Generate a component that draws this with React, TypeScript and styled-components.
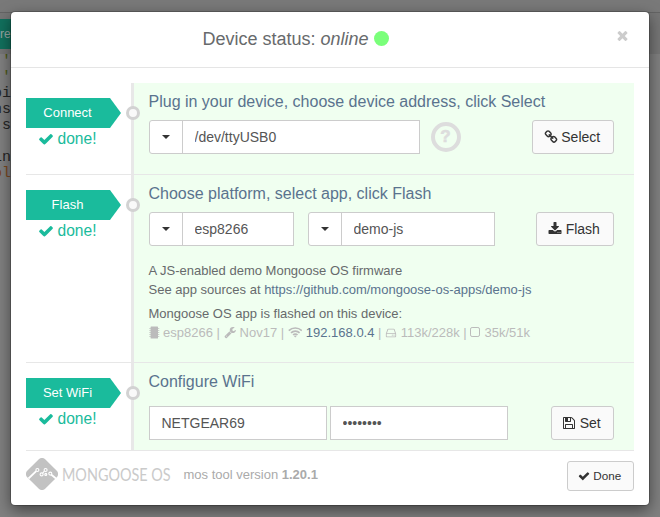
import React from "react";
import styled, { createGlobalStyle, css } from "styled-components";

const GlobalStyle = createGlobalStyle`
  * { box-sizing: border-box; }
  body {
    margin: 0;
    overflow: hidden;
    background: #7e7e7e;
    color: #676a6c;
    font: 13px/18.57px "Liberation Sans", Arial, sans-serif;
  }
`;

/* Page behind the dialog */

const Stage = styled.div`
  position: relative;
  width: 660px;
  height: 517px;
  overflow: hidden;
`;

const Page = styled.div`
  display: flex;
  flex-direction: column;
  height: 100%;
  background: #808080;
`;

const PageBar = styled.div`
  height: 13px;
  background: #797979;
  border-bottom: 1px solid #646464;
`;

const PageTools = styled.div`
  height: 41px;
  padding-top: 6px;
  background: #767676;
`;

const PageButton = styled.div`
  width: 60px;
  height: 30px;
  background: #11705d;
  color: #9aa8a5;
  font-size: 12px;
  line-height: 30px;
`;

const Code = styled.div`
  font: 15px/16px "Liberation Mono", monospace;
  color: #1c1c1c;
`;

const CodeLine = styled.div<{ $color?: string }>`
  height: 16px;
  white-space: pre;
  text-indent: -7px;
  color: ${(p) => p.$color ?? "#252525"};
`;

/* Dialog */

const Dialog = styled.section`
  position: absolute;
  left: 11px;
  top: 12px;
  width: 638px;
  height: 493px;
  display: flex;
  flex-direction: column;
  background: #fff;
  border-radius: 4px;
  box-shadow: 0 0 0 1px rgba(0, 0, 0, 0.2), 0 5px 15px rgba(0, 0, 0, 0.5);
`;

const Header = styled.header`
  display: grid;
  grid-template-columns: 40px 1fr 40px;
  height: 56px;
  border-bottom: 1px solid #e5e5e5;
`;

const Title = styled.h4`
  grid-column: 2;
  display: flex;
  align-items: center;
  justify-content: center;
  margin: 0;
  padding: 0 69px 2px 0;
  font-size: 18px;
  font-weight: 400;
  line-height: 20px;
  white-space: pre;
`;

const OnlineDot = styled.span`
  width: 15px;
  height: 15px;
  margin-left: 5px;
  border-radius: 50%;
  background: #7aff7a;
`;

const Close = styled.button`
  display: flex;
  padding: 16px 0 0 6px;
  border: 0;
  background: none;
  color: #ccc;
`;

const Steps = styled.main`
  padding: 15px 15px 0;
`;

const Step = styled.div<{ $height: number }>`
  display: grid;
  grid-template-columns: 105px 1fr;
  height: ${(p) => p.$height}px;
  border-bottom: 1px solid #e7e7e7;
`;

const StepSide = styled.div`
  padding-top: 15px;
`;

const RibbonRow = styled.div`
  display: flex;
  align-items: center;
  gap: 5px;
  width: 120px;
  height: 30px;
`;

const Ribbon = styled.div`
  flex: none;
  width: 95px;
  height: 30px;
  padding-right: 12px;
  background: #1abb9c;
  clip-path: polygon(0 0, 84px 0, 100% 50%, 84px 100%, 0 100%);
  color: #fff;
  font-size: 13px;
  line-height: 30px;
  text-align: center;
`;

const Node = styled.span`
  position: relative;
  z-index: 1;
  flex: none;
  width: 14px;
  height: 14px;
  border: 3px solid #d2d2d2;
  border-radius: 50%;
  background: #f9f9f9;
`;

const DoneMark = styled.div`
  display: flex;
  align-items: center;
  gap: 3.5px;
  height: 22px;
  padding-left: 12px;
  color: #1abb9c;
  font-size: 15.6px;
`;

const StepBody = styled.div`
  padding: 8px 20px 0 15px;
  border-left: 3px solid #e8e8e8;
  background: #f0fff0;
`;

const StepTitle = styled.h5`
  height: 20px;
  margin: 0 0 0 -0.5px;
  color: #5a738e;
  font-size: 16px;
  font-weight: 400;
  line-height: 21px;
  white-space: nowrap;
`;

const ControlRow = styled.div<{ $top: number }>`
  display: flex;
  height: 34px;
  margin-top: ${(p) => p.$top}px;
`;

const InputGroup = styled.div`
  display: flex;
`;

const DropButton = styled.button`
  display: flex;
  align-items: center;
  justify-content: center;
  width: 34px;
  height: 34px;
  margin-right: -1px;
  padding: 0;
  border: 1px solid #ccc;
  border-radius: 3px 0 0 3px;
  background: #fff;
`;

const Caret = styled.span`
  border-top: 4px solid #333;
  border-left: 4px solid transparent;
  border-right: 4px solid transparent;
`;

const Input = styled.input<{ $width: number }>`
  width: ${(p) => p.$width}px;
  height: 34px;
  padding: 0 11.5px;
  border: 1px solid #ccc;
  border-radius: 0;
  outline: 0;
  background: #fff;
  color: #555;
  font: 14px/20px "Liberation Sans", Arial, sans-serif;
`;

const HelpBadge = styled.span`
  display: flex;
  align-items: center;
  justify-content: center;
  width: 30px;
  height: 30px;
  margin: 2px 0 0 10.5px;
  border: 4px solid #ddd;
  border-radius: 50%;
  color: #ddd;
  font-size: 17px;
  font-weight: 700;
  -webkit-text-stroke: 0.6px #ddd;
`;

const Button = styled.button<{ $width: number; $small?: boolean }>`
  display: flex;
  flex: none;
  align-items: center;
  justify-content: center;
  gap: 3.5px;
  width: ${(p) => p.$width}px;
  height: 34px;
  margin-left: auto;
  padding: 0 2px 0 0;
  border: 1px solid #ccc;
  border-radius: 3px;
  background: #fafafa;
  color: #333;
  font: 14px/20px "Liberation Sans", Arial, sans-serif;
  ${(p) => p.$small && css`
    height: 30px;
    font-size: 11.7px;
  `}
`;

const Note = styled.div<{ $top: number }>`
  height: 19px;
  margin: ${(p) => p.$top}px 0 0 -0.5px;
  line-height: 19px;
  white-space: pre;
`;

const Link = styled.a`
  color: #5a738e;
`;

const DeviceFacts = styled(Note)`
  display: flex;
  align-items: center;
  color: #bbb;

  ${Link} {
    margin-left: 3.5px;
  }
`;

const Footer = styled.footer`
  display: flex;
  align-items: center;
  height: 50px;
  padding: 0 15px;
  color: #aaa;
`;

const LogoWord = styled.span`
  width: 108px;
  margin: -3px 0 0 4px;
  color: #cacaca;
  font: 400 16.6px/24px Lato, "Open Sans", sans-serif;
  white-space: nowrap;
  transform: scaleX(0.868);
  transform-origin: left center;
`;

const Version = styled.span`
  margin: -2px 0 0 13.5px;
`;

const Glyph = styled.svg`
  flex: none;
  fill: currentColor;
`;

const LogoGlyph = styled(Glyph)`
  margin-top: -4px;
`;

const PATHS = {
  check: "M1671 566q0 40-28 68l-724 724-136 136q-28 28-68 28t-68-28l-136-136-362-362q-28-28-28-68t28-68l136-136q28-28 68-28t68 28l294 295 656-657q28-28 68-28t68 28l136 136q28 28 28 68z",
  close: "M1490 1322q0 40-28 68l-136 136q-28 28-68 28t-68-28l-294-294-294 294q-28 28-68 28t-68-28l-136-136q-28-28-28-68t28-68l294-294-294-294q-28-28-28-68t28-68l136-136q28-28 68-28t68 28l294 294 294-294q28-28 68-28t68 28l136 136q28 28 28 68t-28 68l-294 294 294 294q28 28 28 68z",
  download: "M1344 1344q0-26-19-45t-45-19-45 19-19 45 19 45 45 19 45-19 19-45zm256 0q0-26-19-45t-45-19-45 19-19 45 19 45 45 19 45-19 19-45zm128-224v320q0 40-28 68t-68 28h-1472q-40 0-68-28t-28-68v-320q0-40 28-68t68-28h465l135 136q58 56 136 56t136-56l136-136h464q40 0 68 28t28 68zm-325-569q17 41-14 70l-448 448q-18 19-45 19t-45-19l-448-448q-31-29-14-70 17-39 59-39h256v-448q0-26 19-45t45-19h256q26 0 45 19t19 45v448h256q42 0 59 39z",
  wrench: "M448 1472q0-26-19-45t-45-19-45 19-19 45 19 45 45 19 45-19 19-45zm644-420l-682 682q-37 37-90 37-52 0-91-37l-106-108q-38-36-38-90 0-53 38-91l681-681q39 98 114.5 173.5t173.5 114.5zm634-435q0 39-23 106-47 134-164.5 217.5t-258.5 83.5q-185 0-316.5-131.5t-131.5-316.5 131.5-316.5 316.5-131.5q58 0 121.5 16.5t107.5 46.5q16 11 16 28t-16 28l-293 169v224l193 107q5-3 79-48.5t135.5-81 70.5-35.5q15 0 23.5 10t8.5 25z",
  save: "M512 1536h768v-384h-768v384zm896 0h128v-896q0-14-10-38.5t-20-34.5l-281-281q-10-10-34-20t-39-10v416q0 40-28 68t-68 28h-576q-40 0-68-28t-28-68v-416h-128v1280h128v-416q0-40 28-68t68-28h832q40 0 68 28t28 68v416zm-384-928v-320q0-13-9.5-22.5t-22.5-9.5h-192q-13 0-22.5 9.5t-9.5 22.5v320q0 13 9.5 22.5t22.5 9.5h192q13 0 22.5-9.5t9.5-22.5zm640 32v928q0 40-28 68t-68 28h-1344q-40 0-68-28t-28-68v-1344q0-40 28-68t68-28h928q40 0 88 20t76 48l280 280q28 28 48 76t20 88z",
  drive: "M1168 1216q0 33-23.5 56.5t-56.5 23.5-56.5-23.5-23.5-56.5 23.5-56.5 56.5-23.5 56.5 23.5 23.5 56.5zm256 0q0 33-23.5 56.5t-56.5 23.5-56.5-23.5-23.5-56.5 23.5-56.5 56.5-23.5 56.5 23.5 23.5 56.5zm112 160v-320q0-13-9.5-22.5t-22.5-9.5h-1216q-13 0-22.5 9.5t-9.5 22.5v320q0 13 9.5 22.5t22.5 9.5h1216q13 0 22.5-9.5t9.5-22.5zm-1230-480h1180l-157-482q-4-13-16-21.5t-26-8.5h-782q-14 0-26 8.5t-16 21.5zm1358 160v320q0 66-47 113t-113 47h-1216q-66 0-113-47t-47-113v-320q0-25 16-75l197-606q17-53 63-86t101-33h782q55 0 101 33t63 86l197 606q16 50 16 75z",
  link: "M1520 1216q0-40-28-68l-208-208q-28-28-68-28-42 0-72 32 3 3 19 18.5t21.5 21.5 15 19 13 25.5 3.5 27.5q0 40-28 68t-68 28q-15 0-27.5-3.5t-25.5-13-19-15-21.5-21.5-18.5-19q-33 31-33 73 0 40 28 68l206 207q27 27 68 27 40 0 68-26l147-146q28-28 28-67zm-703-705q0-40-28-68l-206-207q-28-28-68-28-39 0-68 27l-147 146q-28 28-28 67 0 40 28 68l208 208q27 27 68 27 42 0 72-31-3-3-19-18.5t-21.5-21.5-15-19-13-25.5-3.5-27.5q0-40 28-68t68-28q15 0 27.5 3.5t25.5 13 19 15 21.5 21.5 18.5 19q33-31 33-73zm895 705q0 120-85 203l-147 146q-83 83-203 83-121 0-204-85l-206-207q-83-83-83-203 0-123 88-209l-88-88q-86 88-208 88-120 0-204-84l-208-208q-84-84-84-204t85-203l147-146q83-83 203-83 121 0 204 85l206 207q83 83 83 203 0 123-88 209l88 88q86-88 208-88 120 0 204 84l208 208q84 84 84 204z",
};

const Icon = ({ name, size = 14 }: { name: keyof typeof PATHS; size?: number }) => (
  <Glyph width={size} height={size} viewBox="0 0 1792 1792">
    <path d={PATHS[name]} />
  </Glyph>
);

const ChipIcon = () => (
  <Glyph width="11" height="13" viewBox="0 0 11 13">
    <rect x="1.6" y="0.5" width="7.4" height="12" rx="0.6" />
    <path d="M.3 2.5h10M.3 4.5h10M.3 6.5h10M.3 8.5h10M.3 10.5h10" stroke="currentColor" strokeWidth="0.7" />
  </Glyph>
);

const WifiIcon = () => (
  <Glyph width="14.5" height="13" viewBox="0.2 0 14.5 13">
    <g fill="none" stroke="currentColor" strokeWidth="1.7">
      <path d="M1 4.7a9.2 9.2 0 0 1 13 0" />
      <path d="M3.2 6.9a6.1 6.1 0 0 1 8.6 0" />
      <path d="M5.3 9a3.1 3.1 0 0 1 4.4 0" />
    </g>
    <path d="M6.1 10a2.2 2.2 0 0 1 2.8 0L7.5 11.5z" />
  </Glyph>
);

const SquareIcon = () => (
  <Glyph width="10.5" height="13" viewBox="0 0 10.5 13">
    <rect x="0.5" y="1.5" width="9" height="9" rx="1.6" fill="none" stroke="currentColor" />
  </Glyph>
);

const LogoMark = () => (
  <LogoGlyph width="32" height="32" viewBox="0 0 32 32">
    <rect x="3.3" y="3.3" width="25.4" height="25.4" rx="4.5" transform="rotate(45 16 16)" fill="#c2c2c2" />
    <g fill="none" stroke="#fff" strokeWidth="1.1">
      <path d="M2.5 20.5 10.2 13.2" strokeWidth="1.8" />
      <circle cx="11.4" cy="12" r="1.5" />
      <circle cx="15.6" cy="16.4" r="1.5" />
      <path d="M16.7 15.2 18.4 13.2" />
      <circle cx="19.6" cy="12" r="1.5" />
      <circle cx="19.8" cy="16.4" r="1" />
      <circle cx="24.3" cy="15.6" r="1.5" />
      <path d="M25.4 16.8 30 20.5" strokeWidth="1.8" />
    </g>
  </LogoGlyph>
);

const StepLabel = ({ children }: { children: React.ReactNode }) => (
  <StepSide>
    <RibbonRow>
      <Ribbon>{children}</Ribbon>
      <Node />
    </RibbonRow>
    <DoneMark>
      <Icon name="check" size={16} />
      done!
    </DoneMark>
  </StepSide>
);

const ComboBox = ({ value, width }: { value: string; width: number }) => (
  <InputGroup>
    <DropButton><Caret /></DropButton>
    <Input $width={width} defaultValue={value} />
  </InputGroup>
);

const ComboPair = styled.div`
  display: flex;
  gap: 14px;
`;

const FieldPair = styled.div`
  display: flex;
  gap: 3px;
`;

export default function App() {
  return (
    <Stage>
      <GlobalStyle />
      <Page>
        <PageBar />
        <PageTools><PageButton>res</PageButton></PageTools>
        <Code>
          <CodeLine $color="#4d5a16"> '</CodeLine>
          <CodeLine $color="#4d5a16"> '</CodeLine>
          <CodeLine>pi</CodeLine>
          <CodeLine>ns</CodeLine>
          <CodeLine> s</CodeLine>
          <CodeLine> </CodeLine>
          <CodeLine>in</CodeLine>
          <CodeLine $color="#7a481e">ol</CodeLine>
        </Code>
      </Page>
      <Dialog>
        <Header>
          <Title>Device status: <em>online</em><OnlineDot /></Title>
          <Close aria-label="Close"><Icon name="close" size={15} /></Close>
        </Header>
        <Steps>
          <Step $height={92}>
            <StepLabel>Connect</StepLabel>
            <StepBody>
              <StepTitle>Plug in your device, choose device address, click Select</StepTitle>
              <ControlRow $top={9}>
                <ComboBox value="/dev/ttyUSB0" width={238} />
                <HelpBadge>?</HelpBadge>
                <Button $width={82}><Icon name="link" />Select</Button>
              </ControlRow>
            </StepBody>
          </Step>
          <Step $height={188}>
            <StepLabel>Flash</StepLabel>
            <StepBody>
              <StepTitle>Choose platform, select app, click Flash</StepTitle>
              <ControlRow $top={9}>
                <ComboPair>
                  <ComboBox value="esp8266" width={112} />
                  <ComboBox value="demo-js" width={154} />
                </ComboPair>
                <Button $width={78}><Icon name="download" />Flash</Button>
              </ControlRow>
              <Note $top={15}>A JS-enabled demo Mongoose OS firmware</Note>
              <Note $top={0}>See app sources at <Link>https://github.com/mongoose-os-apps/demo-js</Link></Note>
              <Note $top={5}>Mongoose OS app is flashed on this device:</Note>
              <DeviceFacts $top={0}>
                <ChipIcon /> esp8266 | <Icon name="wrench" size={12.4} /> Nov17 | <WifiIcon /> <Link>192.168.0.4</Link> | <Icon name="drive" size={12} /> 113k/228k | <SquareIcon /> 35k/51k
              </DeviceFacts>
            </StepBody>
          </Step>
          <Step $height={88}>
            <StepLabel>Set WiFi</StepLabel>
            <StepBody>
              <StepTitle>Configure WiFi</StepTitle>
              <ControlRow $top={15}>
                <FieldPair>
                  <Input $width={178} defaultValue="NETGEAR69" />
                  <Input $width={178} type="password" defaultValue="password" />
                </FieldPair>
                <Button $width={63}><Icon name="save" />Set</Button>
              </ControlRow>
            </StepBody>
          </Step>
        </Steps>
        <Footer>
          <LogoMark />
          <LogoWord>MONGOOSE OS</LogoWord>
          <Version>mos tool version <b>1.20.1</b></Version>
          <Button $width={67} $small><Icon name="check" size={12} />Done</Button>
        </Footer>
      </Dialog>
    </Stage>
  );
}
